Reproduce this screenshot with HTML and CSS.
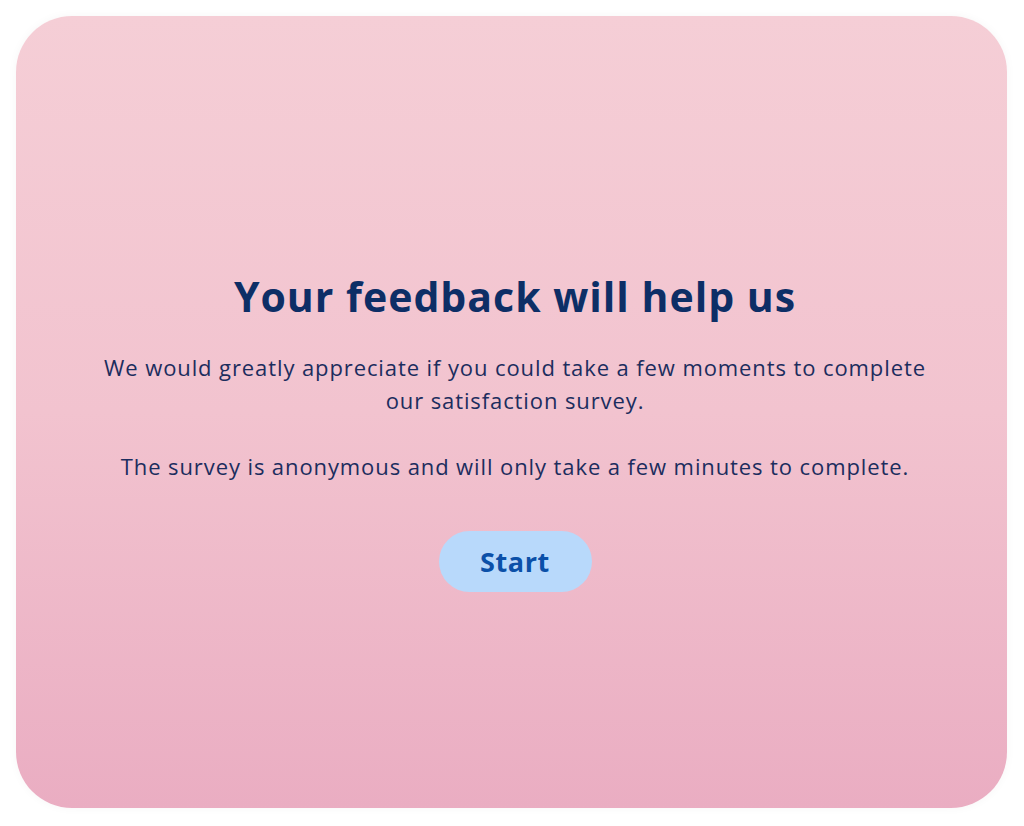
FILE: index.html
```
<!DOCTYPE html>
<html lang="en">
<head>
<meta charset="utf-8">
<link rel="stylesheet" href="styles.css">
</head>
<body>
<main class="card">
  <h1 class="title">Your feedback will help us</h1>
  <p class="text">We would greatly appreciate if you could take a few moments to complete our satisfaction survey.</p>
  <p class="text">The survey is anonymous and will only take a few minutes to complete.</p>
  <button class="start">Start</button>
</main>
</body>
</html>
```
FILE: styles.css
```
html, body {
  margin: 0;
  padding: 0;
  background: #ffffff;
}
body {
  padding: 16px;
  box-sizing: border-box;
  height: 826px;
  font-family: "Open Sans", "Noto Sans", sans-serif;
}
.card {
  box-sizing: border-box;
  height: 792px;
  width: 991px;
  border-radius: 56px;
  background: linear-gradient(180deg, #f5ced6 0%, #f2c3cf 50%, #eaadc2 100%);
  box-shadow: 0 0 10px rgba(0,0,0,0.04);
  display: flex;
  flex-direction: column;
  align-items: center;
  justify-content: center;
  padding: 35px 53px 0 60px;
  text-align: center;
}
.title {
  margin: 0 0 27px;
  font-size: 41px;
  font-weight: 700;
  letter-spacing: 1px;
  color: #0d2e66;
  line-height: 56px;
}
.text {
  margin: 0 0 33px;
  max-width: 850px;
  font-size: 22px;
  letter-spacing: 0.9px;
  line-height: 33px;
  color: #1c2d5e;
}
.start {
  margin-top: 15px;
  width: 153px;
  height: 61px;
  border: none;
  border-radius: 31px;
  background: #b8d9fb;
  color: #0b50a8;
  font-family: "Open Sans", "Noto Sans", sans-serif;
  font-size: 27px;
  font-weight: 700;
  letter-spacing: 0.6px;
  cursor: pointer;
}
```
